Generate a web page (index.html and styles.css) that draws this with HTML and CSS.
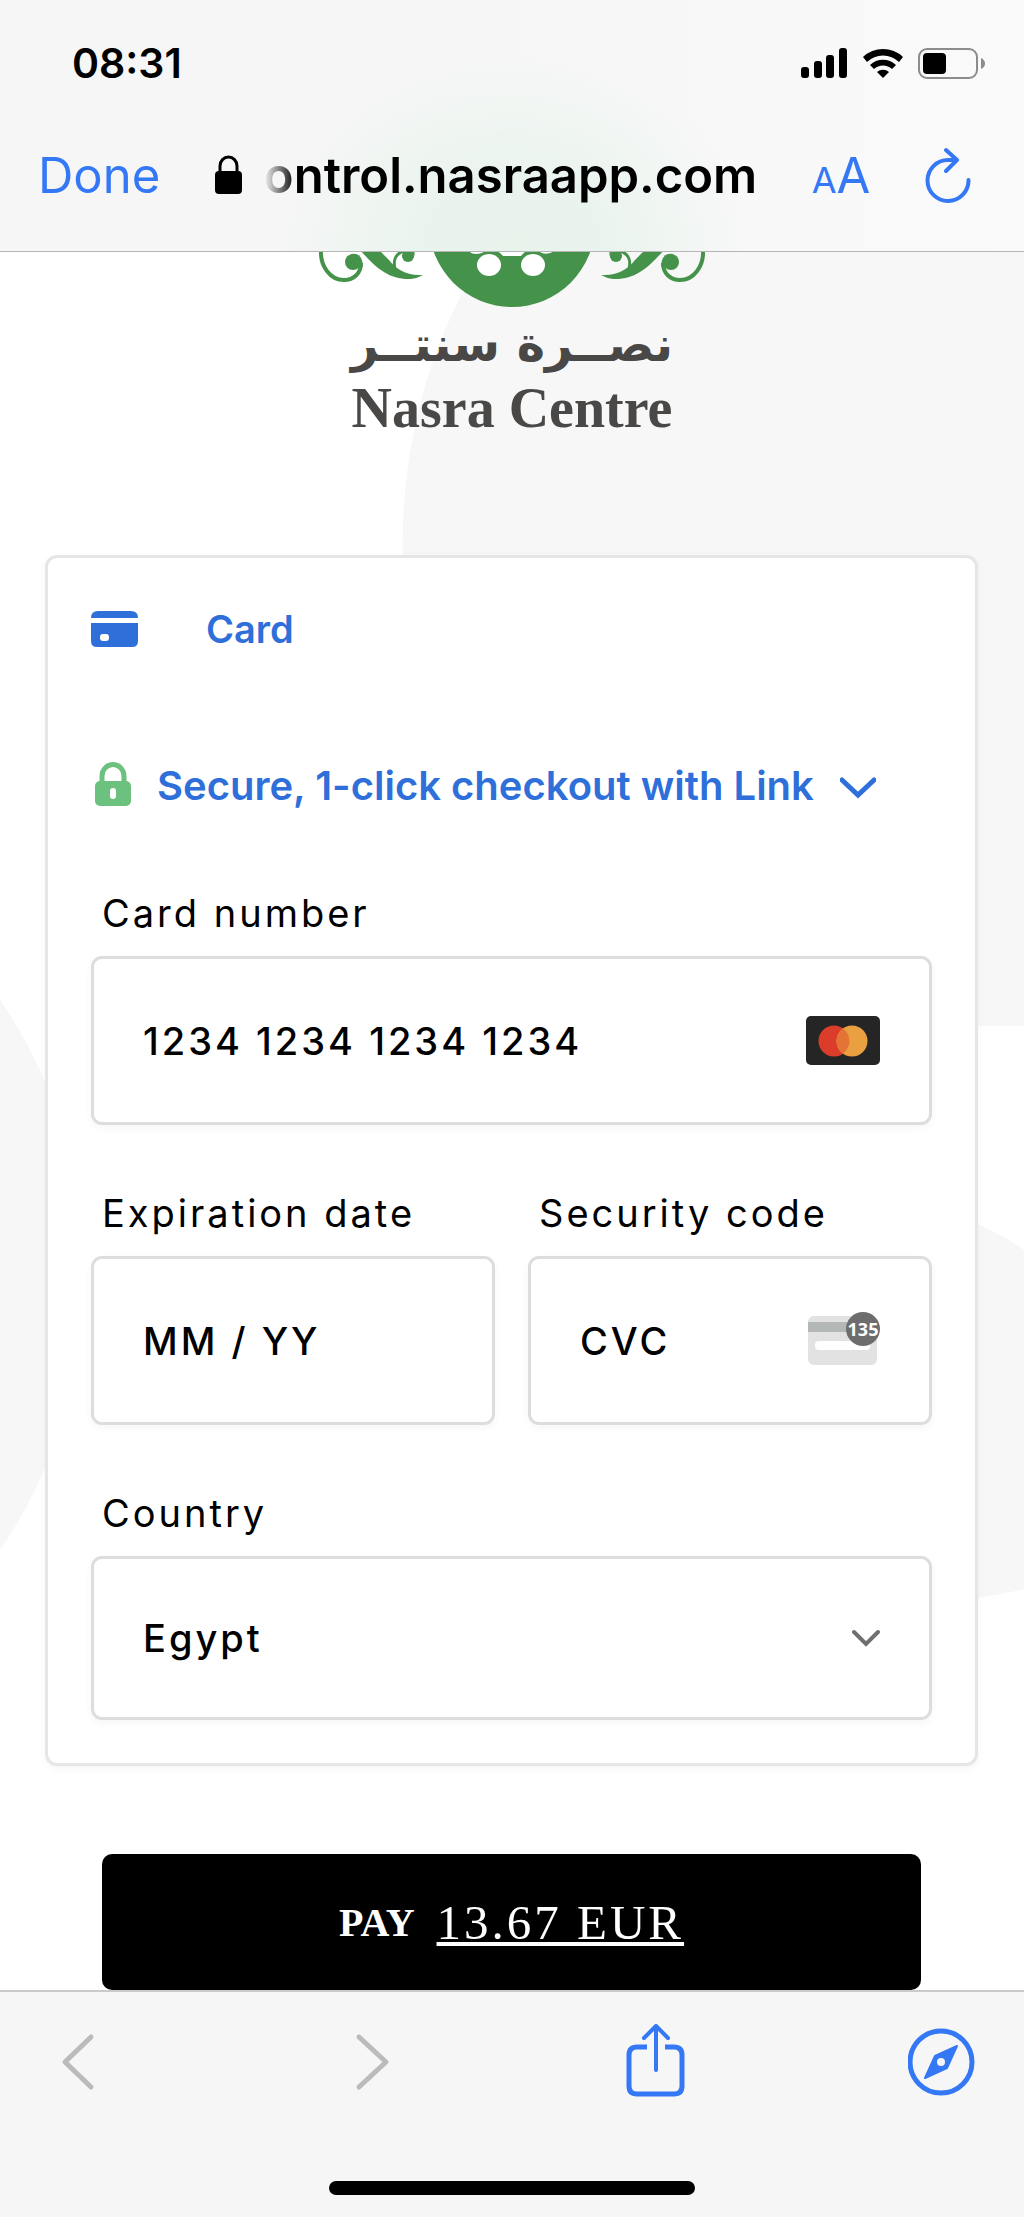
FILE: index.html
```html
<!DOCTYPE html>
<html lang="en">
<head>
  <meta charset="UTF-8">
  <meta name="viewport" content="width=device-width, initial-scale=1.0">
  <title>Nasra Centre - Payment</title>
  <link rel="stylesheet" href="styles.css">
</head>
<body>
  <header class="browser-bar">
    <div class="status">
      <span class="time">08:31</span>
      <div class="status-icons">
        <svg width="47" height="31" viewBox="0 0 47 31">
          <rect x="0" y="19" width="8" height="11" rx="3"/>
          <rect x="13" y="13" width="8" height="17" rx="3"/>
          <rect x="25" y="7" width="8" height="23" rx="3"/>
          <rect x="38" y="0" width="8" height="30" rx="3"/>
        </svg>
        <svg width="42" height="31" viewBox="0 0 42 31">
          <path d="M1 9 A29 29 0 0 1 41 9 L37 14 A23 23 0 0 0 5 14 Z"/>
          <path d="M8 17 A19 19 0 0 1 34 17 L30 21 A13 13 0 0 0 12 21 Z"/>
          <path d="M15 24 A9 9 0 0 1 27 24 L21 30 Z"/>
        </svg>
        <svg width="67" height="31" viewBox="0 0 67 31">
          <rect x="1" y="1" width="58" height="29" rx="8" fill="none" stroke="#8b8d8c" stroke-width="2"/>
          <rect x="5" y="5" width="23" height="21" rx="4"/>
          <path d="M63 10 Q67 12 67 15.500 Q67 19 63 21 Z" fill="#8b8d8c"/>
        </svg>
      </div>
    </div>
    <nav class="address">
      <button class="done">Done</button>
      <div class="site">
        <svg width="27" height="40" viewBox="0 0 27 40">
          <path d="M5 18 V11 a8.500 9 0 0 1 17 0 V18" fill="none" stroke="#000" stroke-width="3"/>
          <rect x="0" y="16" width="27" height="23" rx="4"/>
        </svg>
        <span class="url">ontrol.nasraapp.com</span>
      </div>
      <button class="text-size" aria-label="Text size"><span class="small-a">A</span>A</button>
      <button class="reload" aria-label="Reload">
        <svg width="46" height="56" viewBox="0 0 46 56">
          <path d="M32 13 H23 A20.500 20.500 0 1 0 43.500 33 M21 3 L32 13 L21 24" fill="none" stroke="#3478f6" stroke-width="4" stroke-linecap="round" stroke-linejoin="round"/>
        </svg>
      </button>
    </nav>
  </header>

  <main>
    <svg class="backdrop" viewBox="0 0 1024 1738" preserveAspectRatio="xMidYMin slice">
      <path d="M1024 0 H485 A550 550 0 0 0 403 308 A550 550 0 0 0 570 774 H1024 Z"/>
      <circle cx="-403" cy="1023" r="488"/>
      <path d="M960 965 Q1000 980 1024 998 V1337 Q1000 1343 960 1348 Z"/>
    </svg>

    <div class="logo">
      <svg width="386" height="56" viewBox="320 252 386 56">
        <defs>
          <g id="swirl">
            <path d="M322 250 C321 266 331 280 345 280 C355 280 362 273 362 263" fill="none" stroke="#45934b" stroke-width="4"/>
            <circle cx="354" cy="262" r="8"/>
            <path d="M352 254 Q363 252 364 266 L358 268 Z"/>
            <path d="M360 249 C377 268 390 280 412 279 Q419 278 424 275 C406 276 396 268 390 260 Q385 255 379 249 Z"/>
            <path d="M405 251 C396 254 394 260 396 269" fill="none" stroke="#45934b" stroke-width="3"/>
            <circle cx="409" cy="256" r="6"/>
            <path d="M414 250 Q416 256 411 260" fill="none" stroke="#45934b" stroke-width="2"/>
          </g>
        </defs>
        <g fill="#45934b">
          <use href="#swirl"/>
          <use href="#swirl" transform="matrix(-1 0 0 1 1026 0)"/>
          <circle cx="513" cy="224" r="83"/>
        </g>
        <g fill="#fff">
          <ellipse cx="490" cy="265" rx="12" ry="11"/>
          <ellipse cx="534" cy="265" rx="12" ry="11"/>
          <path d="M470 251 H487 Q482 254 477 254 Q472 254 470 251 Z"/>
          <path d="M497 251 H528 Q525 252 522 256 H504 Q501 252 497 251 Z"/>
          <path d="M539 251 H556 Q548 255 543 253 Z"/>
        </g>
      </svg>
      <div class="logo-arabic" lang="ar" dir="rtl">نصــرة سنتــر</div>
      <div class="logo-name">Nasra Centre</div>
    </div>

    <form class="checkout">
      <section class="card">
        <button type="button" class="method">
          <svg width="47" height="36" viewBox="0 0 47 36" fill="#2f6fd9">
            <path d="M0 7 Q0 0 7 0 H40 Q47 0 47 7 Z"/>
            <path d="M0 12 H47 V30 Q47 36 41 36 H6 Q0 36 0 30 Z"/>
            <rect x="9" y="23" width="9" height="7" rx="3" fill="#fff"/>
          </svg>
          Card
        </button>

        <button type="button" class="link-toggle">
          <svg width="36" height="48" viewBox="0 0 36 48">
            <path d="M7 20 V14 a11 11.500 0 0 1 22 0 V20" fill="none" stroke="#6bc17d" stroke-width="5"/>
            <rect x="0" y="19" width="36" height="25" rx="5" fill="#6bc17d"/>
            <rect x="15" y="26" width="6" height="11" rx="3" fill="#fff"/>
          </svg>
          <span>Secure, 1-click checkout with Link</span>
          <svg width="36" height="26" viewBox="0 0 36 26">
            <path d="M2 7 L18 22 L34 7" fill="none" stroke="#2f6fd9" stroke-width="5" stroke-linecap="round"/>
          </svg>
        </button>

        <div class="field">
          <label for="card-number">Card number</label>
          <div class="control">
            <input type="text" id="card-number" placeholder="1234 1234 1234 1234">
            <svg class="adornment" width="74" height="49" viewBox="0 0 74 49">
              <rect width="74" height="49" rx="5" fill="#252525"/>
              <circle cx="28" cy="25" r="15.500" fill="#dc3d2a"/>
              <circle cx="46" cy="25" r="15.500" fill="#eaa040"/>
              <path d="M37 12.400 A15.500 15.500 0 0 1 37 37.600 A15.500 15.500 0 0 1 37 12.400 Z" fill="#e37435"/>
            </svg>
          </div>
        </div>

        <div class="row">
          <div class="field">
            <label for="expiry">Expiration date</label>
            <div class="control">
              <input type="text" id="expiry" placeholder="MM / YY">
            </div>
          </div>
          <div class="field">
            <label for="cvc">Security code</label>
            <div class="control">
              <input type="text" id="cvc" placeholder="CVC">
              <svg class="adornment" width="72" height="64" viewBox="0 0 72 64">
                <rect x="0" y="7" width="69" height="49" rx="6" fill="#e2e2e2"/>
                <rect x="0" y="13" width="69" height="10" fill="#b3b7b5"/>
                <rect x="7" y="32" width="55" height="9" rx="4" fill="#fff"/>
                <circle cx="55" cy="20" r="17" fill="#6d6d6d"/>
                <text class="cvc-digits" x="55" y="27" text-anchor="middle">135</text>
              </svg>
            </div>
          </div>
        </div>

        <div class="field">
          <label for="country">Country</label>
          <div class="control">
            <select id="country">
              <option>Egypt</option>
            </select>
            <svg class="adornment" width="28" height="18" viewBox="0 0 28 18">
              <path d="M2 3 L14 15 L26 3" fill="none" stroke="#6f6f6f" stroke-width="4" stroke-linecap="round"/>
            </svg>
          </div>
        </div>
      </section>

      <button type="submit" class="pay">
        <span class="pay-label">PAY</span>
        <span class="amount">13.67 EUR</span>
      </button>
    </form>
  </main>

  <footer class="toolbar">
    <div class="toolbar-icons">
      <button aria-label="Back">
        <svg width="68" height="76" viewBox="0 0 68 76">
          <path d="M47 13 L21 38 L47 63" fill="none" stroke="#b9bcba" stroke-width="5" stroke-linecap="round" stroke-linejoin="round"/>
        </svg>
      </button>
      <button aria-label="Forward">
        <svg width="68" height="76" viewBox="0 0 68 76">
          <path d="M27 13 L54 38 L27 63" fill="none" stroke="#b9bcba" stroke-width="5" stroke-linecap="round" stroke-linejoin="round"/>
        </svg>
      </button>
      <button aria-label="Share">
        <svg width="68" height="76" viewBox="0 0 68 76" fill="none" stroke="#3478f6" stroke-width="5">
          <path d="M27 23 H17 Q9 23 9 31 V62 Q9 70 17 70 H54 Q62 70 62 62 V31 Q62 23 54 23 H45"/>
          <path d="M36 46 V3 M24 14 L36 2 L48 14" stroke-width="4" stroke-linecap="round" stroke-linejoin="round"/>
        </svg>
      </button>
      <button aria-label="Open in browser">
        <svg width="68" height="76" viewBox="0 0 68 76">
          <circle cx="33" cy="38" r="31" fill="none" stroke="#3478f6" stroke-width="5"/>
          <path d="M49 22 L39 44 L17 54 L27 32 Z" fill="#3478f6" stroke="#3478f6" stroke-width="2" stroke-linejoin="round"/>
          <circle cx="33" cy="38" r="4" fill="#f6f6f6"/>
        </svg>
      </button>
    </div>
    <div class="home-indicator"></div>
  </footer>
</body>
</html>
```

FILE: styles.css
```css
* {
  box-sizing: border-box;
}
body {
  margin: 0;
  min-height: 100vh;
  display: flex;
  flex-direction: column;
  font-family: Inter, "Liberation Sans", sans-serif;
  color: #000;
  background-color: #fff;
}
button {
  margin: 0;
  padding: 0;
  border: none;
  background: none;
  font-family: inherit;
  cursor: pointer;
}
svg {
  display: block;
  flex-shrink: 0;
}

/* top bar */
.browser-bar {
  padding-bottom: 27px;
  border-bottom: 1px solid #b5b5b5;
  background: radial-gradient(ellipse 240px 200px at 50% 100%, #e8f3ec 0%, #eaf4ee 40%, rgba(248, 249, 248, 0) 100%), linear-gradient(to right, #f6f6f6 40%, #fafafa);
}
.status {
  display: flex;
  justify-content: space-between;
  align-items: center;
  height: 126px;
  padding: 0 39px 0 72px;
}
.time {
  font-size: 41px;
  font-weight: 600;
}
.status-icons {
  display: flex;
  gap: 14px;
}
.address {
  display: flex;
  align-items: center;
  justify-content: space-between;
  height: 98px;
  padding: 0 53px 0 38px;
}
.done {
  font-size: 49px;
  color: #3478f6;
}
.site {
  display: flex;
  align-items: center;
  gap: 22px;
}
.url {
  font-size: 49px;
  font-weight: 600;
  -webkit-mask-image: linear-gradient(to right, transparent, #000 32px);
  mask-image: linear-gradient(to right, transparent, #000 32px);
}
.text-size {
  font-size: 49px;
  color: #3478f6;
}
.small-a {
  font-size: 36px;
}

/* page */
main {
  position: relative;
  flex: 1;
  overflow: hidden;
}
.backdrop {
  position: absolute;
  top: 0;
  left: 0;
  width: 100%;
  height: 100%;
  fill: #f7f7f7;
  z-index: -1;
}
.logo {
  display: flex;
  flex-direction: column;
  align-items: center;
  height: 303px;
  color: #4a4847;
}
.logo-arabic {
  font-family: "DejaVu Sans", sans-serif;
  font-size: 48px;
  font-weight: bold;
  line-height: 72px;
}
.logo-name {
  font-family: "Liberation Serif", serif;
  font-size: 56px;
  font-weight: bold;
  line-height: 56px;
}
.checkout {
  padding: 0 46px 0 45px;
}
.card {
  padding: 47px 43px 43px;
  border: 3px solid #e6e6e6;
  border-radius: 12px;
  background-color: #fff;
  box-shadow: 0 3px 8px rgba(0, 0, 0, 0.04);
}
.method,
.link-toggle {
  display: flex;
  align-items: center;
  font-size: 38px;
  line-height: 48px;
  font-weight: 600;
  color: #2f6fd9;
}
.method {
  gap: 68px;
  margin-bottom: 109px;
}
.link-toggle {
  gap: 26px;
  margin-bottom: 79px;
  padding-left: 4px;
  font-size: 40px;
}
.row {
  display: grid;
  grid-template-columns: 1fr 1fr;
  gap: 33px;
}
.field {
  margin-bottom: 64px;
}
.card > .field:last-child {
  margin-bottom: 0;
}
label {
  display: block;
  margin-bottom: 19px;
  padding-left: 11px;
  font-size: 38px;
  line-height: 48px;
  letter-spacing: 3px;
}
.control {
  position: relative;
}
input,
select {
  display: block;
  width: 100%;
  height: 169px;
  margin: 0;
  padding: 0 49px;
  border: 3px solid #dcdddd;
  border-radius: 11px;
  background-color: #fff;
  box-shadow: 0 3px 8px rgba(0, 0, 0, 0.04);
  font-family: inherit;
  font-size: 38px;
  font-weight: 500;
  letter-spacing: 3px;
  color: #000;
}
input::placeholder {
  color: #000;
  opacity: 1;
}
select {
  height: 164px;
  appearance: none;
  -webkit-appearance: none;
}
.adornment {
  position: absolute;
  top: 0;
  bottom: 0;
  right: 52px;
  margin: auto 0;
  pointer-events: none;
}
.cvc-digits {
  font-family: "Open Sans", sans-serif;
  font-size: 18px;
  font-weight: 700;
  fill: #fff;
}
.pay {
  display: flex;
  align-items: center;
  justify-content: center;
  gap: 22px;
  width: calc(100% - 114px);
  height: 136px;
  margin: 88px auto 0;
  border-radius: 10px;
  background-color: #000;
  color: #fff;
  font-family: "Liberation Serif", serif;
}
.pay-label {
  font-size: 40px;
  font-weight: bold;
}
.amount {
  font-size: 49px;
  letter-spacing: 3px;
  text-decoration: underline;
  text-decoration-thickness: 4px;
  text-decoration-skip-ink: none;
  text-underline-offset: 3px;
}

/* bottom bar */
.toolbar {
  padding: 32px 0 22px;
  border-top: 2px solid #cacaca;
  background-color: #f6f6f6;
}
.toolbar-icons {
  display: flex;
  justify-content: space-between;
  padding: 0 48px 0 44px;
}
.home-indicator {
  width: 366px;
  height: 14px;
  margin: 81px auto 0;
  border-radius: 7px;
  background-color: #000;
}
```
